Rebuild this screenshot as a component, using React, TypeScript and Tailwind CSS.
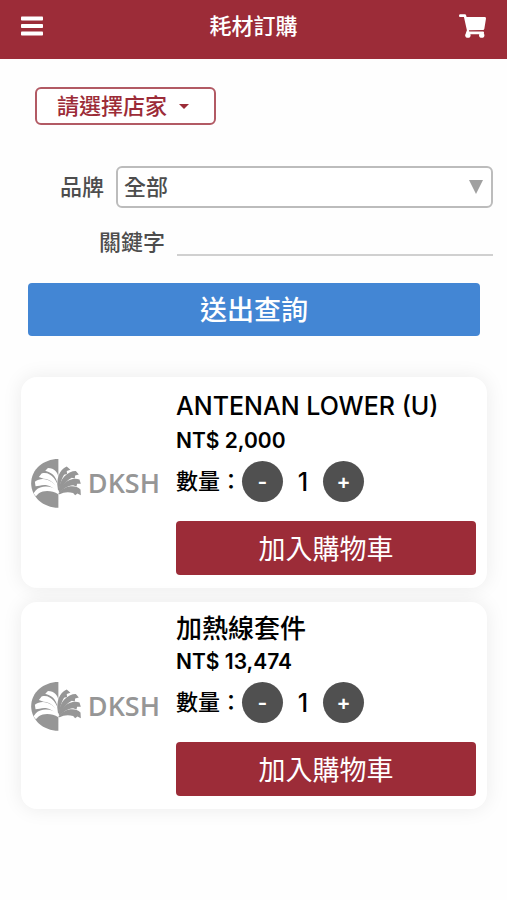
import { useState } from 'react';

type Product = { id: string; name: string; price: string; titleClass: string };

const products: Product[] = [
  { id: 'antenan', name: 'ANTENAN LOWER (U)', price: 'NT$ 2,000', titleClass: 'text-[25px] leading-[38px]' },
  { id: 'heater', name: '加熱線套件', price: 'NT$ 13,474', titleClass: 'text-[26px] leading-[34px]' },
];

function MenuIcon() {
  return (
    <svg viewBox="0 0 22 20" className="h-5 w-[22px]" fill="currentColor" aria-hidden="true">
      <rect y="0.5" width="22" height="4" rx="0.8" />
      <rect y="8" width="22" height="4" rx="0.8" />
      <rect y="15.5" width="22" height="4" rx="0.8" />
    </svg>
  );
}

function CartIcon() {
  return (
    <svg viewBox="0 0 82 72" className="h-6 w-[27px]" fill="currentColor" aria-hidden="true">
      <path d="M3 0H17C20 0 22 2 22 5L23 9H78Q82 9 82 13L77 44Q76 48 73 48L30 49L31 53H73Q76 53 76 56T73 61H24Q21 61 21 57L24 49L15 9H3Q0 9 0 5T3 0Z" />
      <circle cx="27" cy="64" r="8" />
      <circle cx="69" cy="64" r="8" />
    </svg>
  );
}

function BrandLogo() {
  return (
    <div className="flex w-[129px] shrink-0 items-center justify-between pt-1 text-[#969696]">
      <svg viewBox="11 15 148 146" className="h-[49px] w-[50px]" aria-hidden="true">
        <path d="M92 15V160C47 160 11 128 11 87C11 47 47 15 92 15Z" fill="currentColor" />
        <g fill="#fff">
          <path d="M92 110C91 82 84 62 63 54L53 50L61 42C80 42 92 55 92 72Z" />
          <path d="M91 113C82 87 68 75 48 74L34 69L42 58C68 50 88 77 94 105Z" />
          <path d="M90 114C75 96 54 88 36 95L24 96L22 83C46 64 78 80 94 108Z" />
          <path d="M92 120C74 109 50 107 34 117L25 126L18 117L25 108C41 92 74 93 95 113Z" />
        </g>
        <g fill="currentColor">
          <path d="M91 108C85 72 94 48 117 37L128 47L117 51L118 60L109 62C102 73 98 88 94 108Z" />
          <path d="M93 110C95 75 119 51 144 51L153 61L142 64L141 73L132 71C117 79 106 92 97 110Z" />
          <path d="M93 114C103 84 132 68 155 76L159 89L148 89L146 97L136 93C120 94 108 103 97 114Z" />
          <path d="M92 119C108 94 142 90 158 106L159 123L149 118L142 123L136 116C120 112 107 114 96 120Z" />
        </g>
      </svg>
      <span className="font-['Open_Sans','Noto_Sans',sans-serif] text-[27px] leading-8 font-semibold">DKSH</span>
    </div>
  );
}

function ProductCard({ product }: { product: Product }) {
  const [quantity, setQuantity] = useState(1);
  const roundButton =
    'flex size-[41px] items-center justify-center rounded-full bg-[#505050] text-[21px] leading-none font-semibold text-white';
  return (
    <article className="flex items-center gap-4 rounded-2xl bg-white pt-[10px] pr-[11px] pb-[13px] pl-[10px] shadow-[0_0_20px_rgba(0,0,0,0.08)]">
      <BrandLogo />
      <div className="min-w-0 flex-1">
        <h2 className={`font-medium ${product.titleClass}`}>{product.name}</h2>
        <p className="mt-[2px] text-[21px] leading-7 font-semibold">{product.price}</p>
        <div className="mt-[6px] flex items-center">
          <span className="w-[66px] pb-[2px] text-[22px] leading-7 font-medium">數量：</span>
          <button type="button" aria-label="減少數量" className={roundButton} onClick={() => setQuantity(Math.max(1, quantity - 1))}>
            -
          </button>
          <output className="w-10 text-center text-[25px] leading-8 font-medium">{quantity}</output>
          <button type="button" aria-label="增加數量" className={roundButton} onClick={() => setQuantity(quantity + 1)}>
            +
          </button>
        </div>
        <button type="button" className="mt-[19px] h-[54px] w-full rounded bg-[#9c2c38] pt-[3px] text-[27px] leading-8 text-white">
          加入購物車
        </button>
      </div>
    </article>
  );
}

export default function App() {
  return (
    <div className="min-h-screen overflow-hidden bg-[#fefefe] pb-16 font-['Inter','Noto_Sans_CJK_TC',sans-serif] text-black">
      <header className="flex h-[59px] items-center justify-between bg-[#9c2c38] px-[21px] pb-[7px] text-white">
        <button type="button" aria-label="選單" className="flex w-8 justify-start">
          <MenuIcon />
        </button>
        <h1 className="text-[22px] leading-8 font-medium">耗材訂購</h1>
        <button type="button" aria-label="購物車" className="flex w-8 justify-end">
          <CartIcon />
        </button>
      </header>

      <main>
        <div className="px-[35px] pt-7">
          <div className="relative w-[181px] text-[#9c2c38]">
            <select
              aria-label="店家"
              className="block h-[38px] w-full appearance-none rounded-md border-2 border-[#b25a64] bg-white pl-5 text-[22px] leading-8 font-medium outline-none"
            >
              <option>請選擇店家</option>
            </select>
            <svg viewBox="0 0 10 5" className="pointer-events-none absolute top-[17px] right-[27px] h-[5px] w-[10px]" aria-hidden="true">
              <path d="M0 0H10L5 5Z" fill="currentColor" />
            </svg>
          </div>
        </div>

        <form onSubmit={(event) => event.preventDefault()}>
          <div className="mt-[41px] pr-[14px] text-[#4d4d4d]">
            <div className="flex items-center gap-3">
              <label htmlFor="brand" className="w-[104px] text-right text-[22px] leading-8 font-medium">
                品牌
              </label>
              <div className="relative flex-1">
                <select
                  id="brand"
                  className="block h-[42px] w-full appearance-none rounded-md border-2 border-[#bcbcbc] bg-white pl-[6px] text-[22px] leading-8 font-medium outline-none"
                >
                  <option>全部</option>
                </select>
                <svg viewBox="0 0 14 14" className="pointer-events-none absolute top-[14px] right-[10px] size-[14px]" aria-hidden="true">
                  <path d="M0 0H14L7 14Z" fill="#a0a0a0" />
                </svg>
              </div>
            </div>
            <div className="mt-3 flex items-end gap-3">
              <label htmlFor="keyword" className="w-[165px] text-right text-[22px] leading-7 font-medium">
                關鍵字
              </label>
              <input
                id="keyword"
                type="text"
                className="h-9 min-w-0 flex-1 border-b-2 border-[#d0d0d0] bg-transparent text-[22px] outline-none"
              />
            </div>
          </div>
          <div className="mt-[27px] pr-[27px] pl-7">
            <button type="submit" className="h-[53px] w-full rounded bg-[#4386d4] pt-[3px] text-[27px] leading-8 font-medium text-white">
              送出查詢
            </button>
          </div>
        </form>

        <section aria-label="耗材列表" className="mt-[41px] flex flex-col gap-[14px] pr-5 pl-[21px]">
          {products.map((product) => (
            <ProductCard key={product.id} product={product} />
          ))}
        </section>
      </main>
    </div>
  );
}
